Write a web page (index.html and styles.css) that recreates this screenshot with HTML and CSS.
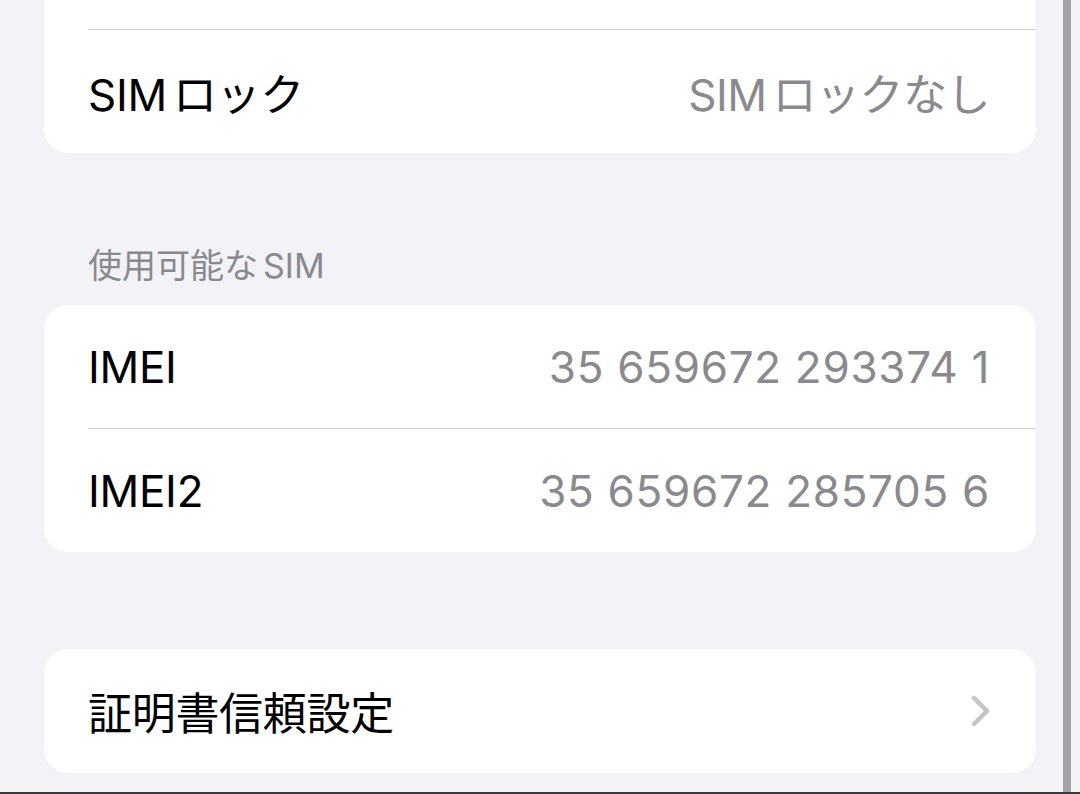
FILE: index.html
```html
<!DOCTYPE html>
<html lang="ja">
<head>
  <meta charset="UTF-8" />
  <meta name="viewport" content="width=device-width, initial-scale=1.0"/>
  <title>情報</title>
  <link rel="stylesheet" href="styles.css">
</head>
<body>
  <div class="screen">
    <div class="card card-top">
      <div class="row"></div>
      <div class="row">
        <div class="row-body">
          <span class="label"><span class="latin">SIM</span>ロック</span>
          <span class="value"><span class="latin">SIM</span>ロックなし</span>
        </div>
      </div>
    </div>

    <div class="section-header">使用可能な<span class="latin-before">SIM</span></div>
    <div class="card">
      <div class="row">
        <div class="row-body">
          <span class="label">IMEI</span>
          <span class="value imei">35 659672 293374 1</span>
        </div>
      </div>
      <div class="row">
        <div class="row-body">
          <span class="label">IMEI2</span>
          <span class="value imei">35 659672 285705 6</span>
        </div>
      </div>
    </div>

    <div class="card card-link">
      <div class="row">
        <div class="row-body">
          <span class="label">証明書信頼設定</span>
          <svg class="chevron" width="22" height="32" viewBox="0 0 22 32">
            <polyline points="4,3 17,16 4,29" fill="none" stroke="#c4c4c7" stroke-width="4.5" stroke-linecap="round" stroke-linejoin="round"/>
          </svg>
        </div>
      </div>
    </div>
  </div>

  <div class="scroll-indicator"></div>
  <div class="bottom-edge"></div>
</body>
</html>
```

FILE: styles.css
```css
:root {
  --bg: #f2f2f7;
  --card: #ffffff;
  --text: #000000;
  --secondary: #8a8a8e;
  --separator: #d1d1d6;
}

body {
  margin: 0;
  width: 1080px;
  height: 794px;
  overflow: hidden;
  position: relative;
  background: var(--bg);
  font-family: Inter, "Noto Sans CJK JP", sans-serif;
  color: var(--text);
}

.screen {
  padding: 0 44px;
}

.card {
  background: var(--card);
  border-radius: 24px;
  overflow: hidden;
}

.card-top {
  margin-top: -94px;
}

.row {
  height: 123px;
  padding-left: 44px;
}

.row + .row {
  height: 124px;
}

.row + .row .row-body {
  border-top: 1px solid var(--separator);
}

.row-body {
  height: 100%;
  box-sizing: border-box;
  display: flex;
  align-items: center;
  justify-content: space-between;
  padding-right: 46px;
}

.label {
  font-size: 44px;
  letter-spacing: -0.3px;
}

.value {
  font-size: 44px;
  color: var(--secondary);
  letter-spacing: -0.5px;
}

.value.imei {
  letter-spacing: 0.7px;
}

/* iOS puts a little air between latin and kana */
.latin {
  margin-right: 6px;
}

.latin-before {
  margin-left: 5px;
}

.section-header {
  font-size: 34px;
  line-height: 42px;
  color: var(--secondary);
  padding: 92px 0 18px 44px;
}

.card-link {
  margin-top: 97px;
}

.card-link .row {
  height: 124px;
}

.chevron {
  margin-right: -2px;
}

.scroll-indicator {
  position: absolute;
  top: 0;
  right: 9px;
  width: 8px;
  height: 100%;
  background: #a3a2a8;
}

.bottom-edge {
  position: absolute;
  left: 0;
  right: 0;
  bottom: 0;
  height: 2px;
  background: #3a3a3c;
}
```
